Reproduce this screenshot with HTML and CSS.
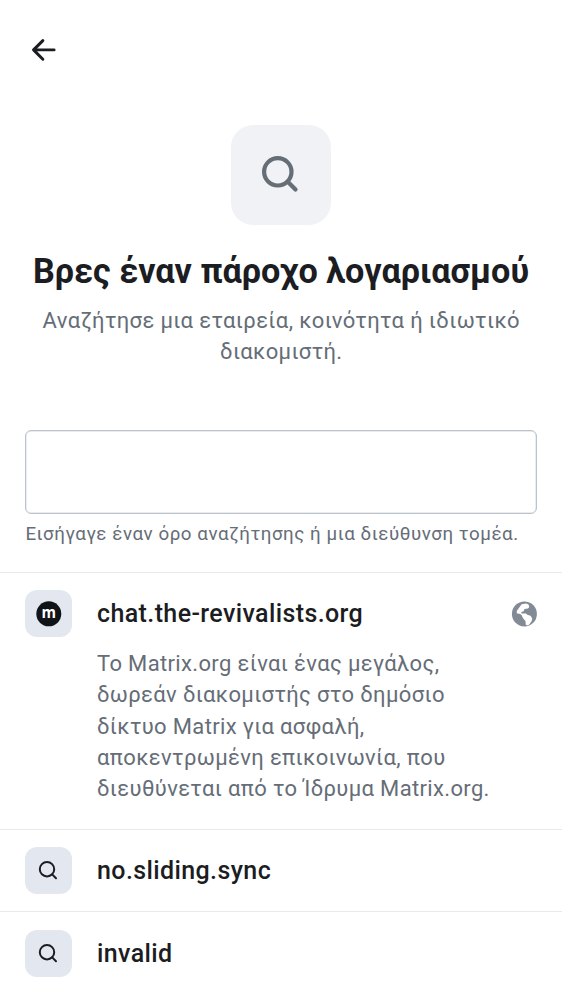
FILE: index.html
```html
<!DOCTYPE html>
<html lang="el">
<head>
<meta charset="utf-8">
<title>Βρες έναν πάροχο λογαριασμού</title>
<link rel="stylesheet" href="styles.css">
</head>
<body>
<main class="screen">
  <nav class="topbar">
    <svg class="back" viewBox="0 0 24 24" fill="none" stroke="#1b1d22" stroke-width="2.3" stroke-linecap="round" stroke-linejoin="round"><path d="M20.200 12.300H4.500M11.500 5.100L4.300 12.300l7.200 7.200"/></svg>
  </nav>
  <header class="hero">
    <div class="hero-icon"><svg viewBox="0 0 50 50" fill="none" stroke="#656d77" stroke-width="4.200" stroke-linecap="round"><circle cx="21.800" cy="21.800" r="13.700"/><path d="M32 32l7.500 7.500"/></svg></div>
    <h1 class="title">Βρες έναν πάροχο λογαριασμού</h1>
    <p class="subtitle">Αναζήτησε μια εταιρεία, κοινότητα ή ιδιωτικό<br>διακομιστή.</p>
  </header>
  <section class="search">
    <div class="field"></div>
    <p class="hint">Εισήγαγε έναν όρο αναζήτησης ή μια διεύθυνση τομέα.</p>
  </section>
  <section class="item item-main">
    <div class="row">
      <div class="tile"><svg class="matrix" viewBox="0 0 26 26"><circle cx="12.800" cy="12.800" r="12.500" fill="#101317"/><text class="matrix-m" x="12.700" y="16.800" text-anchor="middle" textLength="14.500" lengthAdjust="spacingAndGlyphs">m</text></svg></div>
      <span class="name">chat.the-revivalists.org</span>
      <svg class="globe" viewBox="0 0 26 26"><circle cx="13.400" cy="12.900" r="12.500" fill="#818a95"/><path d="M10.600 3.300L15.300 2.500l2.200 1 .800 2.500-1.300 1.500-3.500.500-.900 2.300-2.300.600.200 1.600H15l1.300 1.300 3.200 1 1.800 2.700-.8 3-2.500 3.200-2 .900-1.300-1.200-.2-3.500-2.500-2.600-1.200-2.800-1.600-1.500-3.500-.700.2-2.500z" fill="#fff"/></svg>
    </div>
    <p class="about">Το Matrix.org είναι ένας μεγάλος,<br>δωρεάν διακομιστής στο δημόσιο<br>δίκτυο Matrix για ασφαλή,<br>αποκεντρωμένη επικοινωνία, που<br>διευθύνεται από το Ίδρυμα Matrix.org.</p>
  </section>
  <section class="item">
    <div class="row">
      <div class="tile"><svg class="lens" viewBox="0 0 25 25" fill="none" stroke="#1b1d22" stroke-width="2" stroke-linecap="round"><circle cx="11" cy="11.200" r="7.200"/><path d="M16.200 16.400l3.800 3.800"/></svg></div>
      <span class="name">no.sliding.sync</span>
    </div>
  </section>
  <section class="item item-last">
    <div class="row">
      <div class="tile"><svg class="lens" viewBox="0 0 25 25" fill="none" stroke="#1b1d22" stroke-width="2" stroke-linecap="round"><circle cx="11" cy="11.200" r="7.200"/><path d="M16.200 16.400l3.800 3.800"/></svg></div>
      <span class="name">invalid</span>
    </div>
  </section>
</main>
</body>
</html>
```
FILE: styles.css
```css
* { box-sizing: border-box; }
body { margin: 0; background: #fff; color: #1b1d22; font-family: Roboto, "Noto Sans", sans-serif; }
h1, p { margin: 0; white-space: nowrap; }
svg { display: block; }
.screen { width: 562px; height: 1000px; overflow: hidden; }
.topbar { height: 125px; padding: 34px 0 0 28px; }
.back { width: 31px; height: 31px; }
.hero { height: 305px; display: flex; flex-direction: column; align-items: center; text-align: center; }
.hero-icon { width: 100px; height: 100px; border-radius: 22px; background: #f0f2f5; display: grid; place-items: center; }
.hero-icon svg { width: 50px; height: 50px; }
.title { margin-top: 25px; font-size: 34.200px; line-height: 42px; font-weight: 700; }
.subtitle { margin-top: 13px; padding-left: .6px; font-size: 22px; line-height: 31.250px; letter-spacing: .36px; color: #656d77; }
.search { height: 142px; padding: 0 25px; }
.field { height: 84px; border: 1px solid #bcc3cf; border-radius: 6px; box-shadow: inset 0 0 0 .5px #d3d8e0; }
.hint { margin-top: 7.500px; padding-left: .4px; font-size: 18.750px; line-height: 25px; letter-spacing: .55px; color: #656d77; }
.item { height: 82px; border-top: 1px solid #e7e9ed; padding: 17px 25px 0; }
.item-main { height: 257px; }
.item-last { padding-top: 17.500px; }
.row { display: flex; align-items: center; height: 47px; }
.tile { width: 47px; height: 47px; margin-right: 25px; border-radius: 12px; background: #e3e7f0; display: grid; place-items: center; }
.matrix { width: 26px; height: 26px; }
.matrix-m { fill: #fff; font: 700 16.500px "Open Sans", sans-serif; }
.lens { width: 25px; height: 25px; }
.name { font-size: 25px; line-height: 37px; font-weight: 500; letter-spacing: .39px; }
.globe { width: 26px; height: 26px; margin-left: auto; }
.about { margin: 11px 0 0 72px; font-size: 22px; line-height: 31.250px; letter-spacing: .35px; color: #656d77; }
```
